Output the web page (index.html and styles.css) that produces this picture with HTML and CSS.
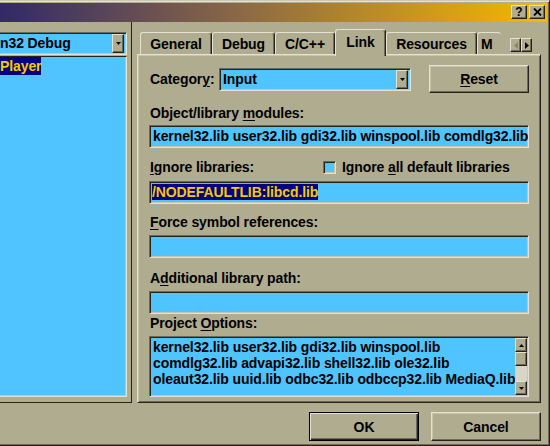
FILE: index.html
```html
<!DOCTYPE html>
<html lang="en">
<head>
  <meta charset="UTF-8" />
  <meta name="viewport" content="width=device-width, initial-scale=1.0"/>
  <title>Project Settings</title>
  <link rel="stylesheet" href="styles.css">
</head>
<body>

  <div class="window">
    <div class="titlebar">
      <span class="cap-btn help">?</span>
      <span class="cap-btn close">
        <svg width="9" height="8" viewBox="0 0 9 8"><path d="M1 0.5l7 7M8 0.5l-7 7" stroke="#000" stroke-width="1.8"/></svg>
      </span>
    </div>

    <div class="main">
      <div class="left-pane">
        <div class="combo settings-for">
          <span class="combo-text">n32 Debug</span>
          <span class="drop-btn"><svg width="7" height="4" viewBox="0 0 7 4"><path d="M0 0h7l-3.5 4z" fill="#000"/></svg></span>
        </div>
        <div class="tree">
          <span class="tree-item selected">Player</span>
        </div>
      </div>

      <div class="right-pane">
        <div class="tabs">
          <span class="tab tab-general">General</span>
          <span class="tab tab-debug">Debug</span>
          <span class="tab tab-cpp">C/C++</span>
          <span class="tab tab-link active">Link</span>
          <span class="tab tab-res">Resources</span>
          <span class="tab tab-more">M</span>
        </div>
        <div class="tab-spin">
          <span class="spin-btn"><svg width="4" height="7" viewBox="0 0 4 7"><path d="M4 0v7l-4-3.5z" fill="#8A866E"/></svg></span>
          <span class="spin-btn"><svg width="4" height="7" viewBox="0 0 4 7"><path d="M0 0v7l4-3.5z" fill="#000"/></svg></span>
        </div>

        <div class="tab-panel">
          <div class="category-row">
            <label class="category-label">Categor<u>y</u>:</label>
            <div class="combo category">
              <span class="combo-text">Input</span>
              <span class="drop-btn"><svg width="7" height="4" viewBox="0 0 7 4"><path d="M0 0h7l-3.5 4z" fill="#000"/></svg></span>
            </div>
            <button class="btn reset"><u>R</u>eset</button>
          </div>

          <div class="label lbl-modules">Object/library <u>m</u>odules:</div>
          <div class="field f-modules">kernel32.lib user32.lib gdi32.lib winspool.lib comdlg32.lib</div>

          <div class="ignore-row">
            <div class="label ignore-label"><u>I</u>gnore libraries:</div>
            <span class="checkbox"></span>
            <span class="check-text">Ignore <u>a</u>ll default libraries</span>
          </div>
          <div class="field f-ignore"><span class="sel">/NODEFAULTLIB:libcd.lib</span></div>

          <div class="label lbl-force"><u>F</u>orce symbol references:</div>
          <div class="field f-force"></div>

          <div class="label lbl-path">A<u>d</u>ditional library path:</div>
          <div class="field f-path"></div>

          <div class="label lbl-options">Project <u>O</u>ptions:</div>
          <div class="field f-options">
            <div class="options-text">
              kernel32.lib user32.lib gdi32.lib winspool.lib<br>
              comdlg32.lib advapi32.lib shell32.lib ole32.lib<br>
              oleaut32.lib uuid.lib odbc32.lib odbccp32.lib MediaQ.lib
            </div>
            <div class="scrollbar">
              <span class="sb-btn"><svg width="7" height="4" viewBox="0 0 7 4"><path d="M0 4h7l-3.5-4z" fill="#000"/></svg></span>
              <span class="sb-thumb"></span>
              <span class="sb-track"></span>
              <span class="sb-btn"><svg width="7" height="4" viewBox="0 0 7 4"><path d="M0 0h7l-3.5 4z" fill="#000"/></svg></span>
            </div>
          </div>
        </div>
      </div>
    </div>

    <div class="footer">
      <button class="btn default">OK</button>
      <button class="btn">Cancel</button>
    </div>
  </div>

</body>
</html>
```

FILE: styles.css
```css
* {
  margin: 0;
  padding: 0;
  box-sizing: border-box;
}

html, body {
  width: 550px;
  height: 446px;
  overflow: hidden;
}

body {
  background: #B0AC90;
  font-family: "Liberation Sans", Arial, sans-serif;
  font-size: 14px;
  font-weight: bold;
  letter-spacing: -0.1px;
  color: #000;
}

u {
  text-decoration-thickness: 1px;
  text-underline-offset: 2px;
}

/* window frame */
.window {
  width: 556px;
  height: 446px;
  margin-left: -6px;
  padding: 2px 2px 1px 2px;
  border-top: 1px solid #CCC8B4;
  border-right: 1px solid #24221A;
  border-bottom: 1px solid #24221A;
  box-shadow: inset 0 1px #E4E2D4, inset -1px 0 #6E6A56, inset 0 -1px #6E6A56;
  display: flex;
  flex-direction: column;
}

.titlebar {
  height: 19px;
  flex: none;
  background: linear-gradient(to right, #302868, #8C6A44 45%, #F8B800);
  display: flex;
  justify-content: flex-end;
  gap: 2px;
  padding: 2px 2px 0 0;
}

.cap-btn {
  width: 16px;
  height: 14px;
  background: #B0AC90;
  border: 1px solid;
  border-color: #E4E2D4 #24221A #24221A #E4E2D4;
  box-shadow: inset -1px -1px #6E6A56;
  display: flex;
  align-items: center;
  justify-content: center;
  font-size: 12px;
  line-height: 12px;
  letter-spacing: 0;
}

.cap-btn svg {
  display: block;
}

.main {
  height: 381px;
  flex: none;
  display: flex;
}

/* left side: configuration + tree */
.left-pane {
  width: 136px;
  flex: none;
  border-right: 1px solid #24221A;
  border-bottom: 1px solid #24221A;
  padding-top: 10px;
  padding-right: 4px;
}

.combo {
  height: 23px;
  background: #50C4FF;
  border: 1px solid;
  border-color: #6E6A56 #E4E2D4 #E4E2D4 #6E6A56;
  box-shadow: inset 1px 1px #24221A, inset -1px -1px #C8C4AC;
  display: flex;
  align-items: center;
  padding: 1px;
}

.combo-text {
  flex: 1;
  padding-left: 2px;
  line-height: 19px;
}

.drop-btn {
  width: 12px;
  height: 19px;
  margin-right: 1px;
  background: #B0AC90;
  border: 1px solid;
  border-color: #E4E2D4 #24221A #24221A #E4E2D4;
  box-shadow: inset -1px -1px #6E6A56;
  display: flex;
  align-items: center;
  justify-content: center;
}

.drop-btn svg {
  width: 5px;
  height: 3px;
}

.tree {
  height: 341px;
  margin-top: 1px;
  background: #50C4FF;
  border: 1px solid;
  border-color: #24221A #E4E2D4 #E4E2D4 #6E6A56;
  box-shadow: inset -1px -1px #C8C4AC;
}

.tree-item {
  display: inline-block;
  margin-left: 3px;
  line-height: 18px;
  height: 18px;
}

.tree-item.selected {
  background: #000080;
  color: #F8C800;
}

/* right side: tab control */
.right-pane {
  flex: 1;
  padding-left: 5px;
  position: relative;
}

.tabs {
  height: 32px;
  padding-left: 3px;
  display: flex;
  align-items: flex-end;
}

.tab {
  height: 22px;
  border: 1px solid;
  border-bottom: none;
  border-color: #E4E2D4 #24221A transparent #E4E2D4;
  border-radius: 3px 3px 0 0;
  box-shadow: inset -1px 0 #6E6A56;
  display: flex;
  align-items: center;
  justify-content: center;
}

.tab.active {
  height: 27px;
  margin-bottom: -2px;
  position: relative;
  z-index: 1;
  background: #B0AC90;
  padding-bottom: 3px;
}

.tab-general { width: 72px; }
.tab-debug { width: 63px; }
.tab-cpp { width: 60px; }
.tab-link { width: 51px; }
.tab-res { width: 91px; }

.tab-more {
  width: 24px;
  border-right: none;
  box-shadow: none;
  justify-content: flex-start;
  padding-left: 3px;
}

.tab-spin {
  position: absolute;
  left: 378px;
  top: 16px;
  display: flex;
}

.spin-btn {
  width: 11px;
  height: 14px;
  background: #B0AC90;
  border: 1px solid;
  border-color: #E4E2D4 #24221A #24221A #E4E2D4;
  box-shadow: inset -1px -1px #6E6A56;
  display: flex;
  align-items: center;
  justify-content: center;
}

.tab-panel {
  width: 404px;
  height: 349px;
  border: 1px solid;
  border-color: #E4E2D4 #24221A #24221A #E4E2D4;
  box-shadow: inset 1px 1px #C8C4AC, inset -1px -1px #6E6A56;
  padding: 10px 11px 0 11px;
}

.category-row {
  height: 28px;
  display: flex;
  align-items: center;
}

.category-label {
  width: 70px;
  padding-left: 1px;
}

.combo.category {
  width: 192px;
}

.btn {
  width: 110px;
  height: 29px;
  background: #B0AC90;
  font: inherit;
  letter-spacing: inherit;
  color: #000;
  border: 1px solid;
  border-color: #E4E2D4 #24221A #24221A #E4E2D4;
  box-shadow: inset -1px -1px #6E6A56, inset 1px 1px #C8C4AC;
}

.btn.reset {
  width: 100px;
  height: 28px;
  margin-left: auto;
}

.btn.default {
  border-color: #000;
  box-shadow: inset 1px 1px #E4E2D4, inset -1px -1px #24221A, inset -2px -2px #6E6A56;
}

.label {
  padding-left: 1px;
  line-height: 16px;
  height: 16px;
}

.field {
  height: 23px;
  background: #50C4FF;
  border: 1px solid;
  border-color: #6E6A56 #E4E2D4 #E4E2D4 #6E6A56;
  box-shadow: inset 1px 1px #24221A, inset -1px -1px #C8C4AC;
  padding-left: 3px;
  line-height: 21px;
  white-space: nowrap;
  overflow: hidden;
}

.lbl-modules { margin-top: 12px; }
.f-modules { margin-top: 4px; }

.ignore-row {
  margin-top: 11px;
  height: 16px;
  display: flex;
  align-items: center;
}

.ignore-label {
  width: 174px;
}

.checkbox {
  width: 13px;
  height: 13px;
  background: #50C4FF;
  border: 1px solid;
  border-color: #6E6A56 #E4E2D4 #E4E2D4 #6E6A56;
  box-shadow: inset 1px 1px #24221A, inset -1px -1px #C8C4AC;
}

.check-text {
  margin-left: 6px;
  line-height: 16px;
}

.f-ignore {
  margin-top: 6px;
  padding-left: 2px;
}

.sel {
  background: #000080;
  color: #F8C800;
  line-height: 16px;
  display: inline-block;
  vertical-align: middle;
  margin-top: -2px;
}

.lbl-force { margin-top: 10px; }
.f-force { margin-top: 5px; }
.lbl-path { margin-top: 12px; }
.f-path { margin-top: 5px; }
.lbl-options { margin-top: 1px; }

.f-options {
  margin-top: 5px;
  height: 61px;
  display: flex;
  padding: 1px 1px 1px 3px;
}

.options-text {
  flex: 1;
  line-height: 16px;
  padding-top: 1px;
}

.scrollbar {
  width: 13px;
  display: flex;
  flex-direction: column;
}

.sb-btn,
.sb-thumb {
  height: 14px;
  background: #B0AC90;
  border: 1px solid;
  border-color: #E4E2D4 #24221A #24221A #E4E2D4;
  box-shadow: inset -1px -1px #6E6A56;
  display: flex;
  align-items: center;
  justify-content: center;
}

.sb-btn svg {
  width: 5px;
  height: 3px;
}

.sb-track {
  flex: 1;
  background: #D8D6C6;
}

/* OK / Cancel */
.footer {
  flex: 1;
  display: flex;
  justify-content: flex-end;
  gap: 12px;
  padding: 9px 6px 0 0;
}
```
